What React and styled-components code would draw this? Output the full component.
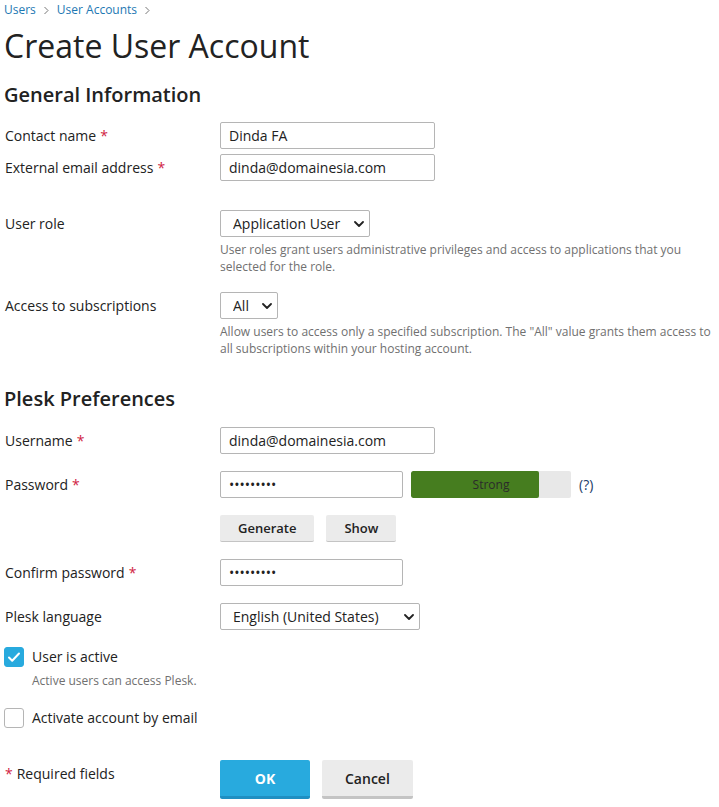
import React from "react";
import styled, { createGlobalStyle } from "styled-components";

const Global = createGlobalStyle`
  html, body { margin: 0; padding: 0; background: #fff; }
  body { font-family: "Open Sans", "Liberation Sans", sans-serif; color: #222; }
  * { box-sizing: border-box; }
`;

const Page = styled.div`
  padding: 0 4px;
  width: 719px;
`;

const Breadcrumbs = styled.nav`
  display: flex;
  align-items: center;
  gap: 5px;
  height: 20px;
  font-size: 12px;
  line-height: 20px;
`;

const Crumb = styled.a`
  color: #1d78b3;
  text-decoration: none;
`;

const Sep = styled.svg`
  width: 7px;
  height: 9px;
  margin: 0 2px;
`;

const Title = styled.h1`
  margin: 6px 0 0;
  font-size: 32px;
  line-height: 40px;
  font-weight: 400;
  color: #222;
`;

const SectionTitle = styled.h2`
  margin: ${(p) => p.$mt}px 0 0;
  font-size: 20px;
  line-height: 28px;
  font-weight: 600;
  color: #222;
`;

const Row = styled.div`
  display: flex;
  align-items: flex-start;
  margin-top: ${(p) => p.$mt}px;
`;

const Label = styled.label`
  width: 216px;
  flex: none;
  font-size: 14px;
  line-height: 27px;
  padding-left: 1px;
`;

const Req = styled.span`
  color: #d02343;
  margin-left: 4px;
`;

const Field = styled.div`
  display: flex;
  flex-direction: column;
  align-items: flex-start;
  flex: 1;
  min-width: 0;
`;

const Inline = styled.div`
  display: flex;
  align-items: center;
  gap: ${(p) => p.$gap || 8}px;
`;

const TextInput = styled.input`
  width: ${(p) => p.$w}px;
  height: 27px;
  border: 1px solid #b5b5b5;
  border-radius: 2px;
  padding: 0 8px;
  font-family: inherit;
  font-size: 14px;
  color: #222;
  background: #fff;
  outline: none;
`;

const SelectWrap = styled.span`
  position: relative;
  display: inline-flex;
`;

const Select = styled.select`
  appearance: none;
  -webkit-appearance: none;
  height: 27px;
  ${(p) => (p.$w ? `width: ${p.$w}px;` : "")}
  border: 1px solid #b5b5b5;
  border-radius: 2px;
  padding: 0 28px 0 12px;
  font-family: inherit;
  font-size: 14px;
  color: #222;
  background: #fff;
  outline: none;
`;

const Chevron = styled.svg`
  position: absolute;
  right: 6px;
  top: 11px;
  width: 10px;
  height: 6px;
  pointer-events: none;
`;

const Hint = styled.div`
  margin-top: ${(p) => p.$mt ?? 4}px;
  font-size: 12px;
  line-height: 17px;
  color: #707070;
  ${(p) => (p.$indent ? `padding-left: ${p.$indent}px;` : "")}
`;

const Strength = styled.div`
  position: relative;
  width: 160px;
  height: 27px;
  border-radius: 2px;
  background: #e8e8e8;
  overflow: hidden;
`;

const StrengthFill = styled.div`
  height: 100%;
  background: #467d1f;
  border-radius: 2px;
`;

const StrengthText = styled.span`
  position: absolute;
  inset: 0;
  display: flex;
  align-items: center;
  justify-content: center;
  font-size: 12px;
  color: #2b2b2b;
`;

const HelpLink = styled.a`
  font-size: 14px;
  color: #223c68;
  text-decoration: none;
`;

const Button = styled.button`
  height: ${(p) => (p.$big ? 39 : 27)}px;
  min-width: ${(p) => (p.$big ? 90 : 0)}px;
  padding: 0 ${(p) => (p.$big ? 23 : 18)}px;
  border: none;
  border-bottom: ${(p) => (p.$big ? 3 : 1)}px solid
    ${(p) => (p.$primary ? "#1f8fc2" : "#c4c4c4")};
  border-radius: 2px;
  background: ${(p) => (p.$primary ? "#28aade" : "#ebebeb")};
  color: ${(p) => (p.$primary ? "#fff" : "#222")};
  font-family: inherit;
  font-size: ${(p) => (p.$big ? 14 : 13)}px;
  font-weight: ${(p) => (p.$primary ? 700 : 600)};
  cursor: pointer;
`;

const CheckRow = styled.label`
  display: flex;
  align-items: center;
  gap: 8px;
  margin-top: ${(p) => p.$mt}px;
  font-size: 14px;
  line-height: 20px;
`;

const Box = styled.span`
  width: 20px;
  height: 20px;
  flex: none;
  border-radius: 3px;
  display: inline-flex;
  align-items: center;
  justify-content: center;
  background: ${(p) => (p.$checked ? "#28aade" : "#fff")};
  border: 1px solid ${(p) => (p.$checked ? "#28aade" : "#b5b5b5")};
`;

const Footer = styled.div`
  display: flex;
  align-items: flex-start;
  margin-top: ${(p) => p.$mt}px;
`;

const FooterNote = styled.div`
  width: 216px;
  flex: none;
  font-size: 14px;
  line-height: 28px;
  padding-left: 1px;
`;

const ReqMark = styled.span`
  color: #d02343;
  margin-right: 4px;
`;

function ChevronIcon() {
  return (
    <Chevron viewBox="0 0 10 6">
      <path d="M1 1l4 4 4-4" fill="none" stroke="#222" strokeWidth="1.8" strokeLinecap="round" strokeLinejoin="round" />
    </Chevron>
  );
}

function Dropdown({ value, w }) {
  return (
    <SelectWrap>
      <Select $w={w} defaultValue={value}>
        <option>{value}</option>
      </Select>
      <ChevronIcon />
    </SelectWrap>
  );
}

function SepIcon() {
  return (
    <Sep viewBox="0 0 7 9">
      <path d="M1.5 1l3.5 3.5L1.5 8" fill="none" stroke="#777" strokeWidth="1" />
    </Sep>
  );
}

export default function App() {
  return (
    <>
      <Global />
      <Page>
        <Breadcrumbs>
          <Crumb href="#">Users</Crumb>
          <SepIcon />
          <Crumb href="#">User Accounts</Crumb>
          <SepIcon />
        </Breadcrumbs>
        <Title>Create User Account</Title>

        <SectionTitle $mt={15}>General Information</SectionTitle>

        <Row $mt={13}>
          <Label>Contact name<Req>*</Req></Label>
          <Field>
            <TextInput $w={215} defaultValue="Dinda FA" />
          </Field>
        </Row>
        <Row $mt={5}>
          <Label>External email address<Req>*</Req></Label>
          <Field>
            <TextInput $w={215} defaultValue="dinda@domainesia.com" />
          </Field>
        </Row>
        <Row $mt={29}>
          <Label>User role</Label>
          <Field>
            <Dropdown value="Application User" />
            <Hint>
              User roles grant users administrative privileges and access to applications that you selected for the role.
            </Hint>
          </Field>
        </Row>
        <Row $mt={17}>
          <Label>Access to subscriptions</Label>
          <Field>
            <Dropdown value="All" />
            <Hint>
              Allow users to access only a specified subscription. The "All" value grants them access to all subscriptions within your hosting account.
            </Hint>
          </Field>
        </Row>

        <SectionTitle $mt={28}>Plesk Preferences</SectionTitle>

        <Row $mt={14}>
          <Label>Username<Req>*</Req></Label>
          <Field>
            <TextInput $w={215} defaultValue="dinda@domainesia.com" />
          </Field>
        </Row>
        <Row $mt={17}>
          <Label>Password<Req>*</Req></Label>
          <Field>
            <Inline $gap={8}>
              <TextInput type="password" $w={183} defaultValue="123456789" />
              <Strength>
                <StrengthFill style={{ width: "80%" }} />
                <StrengthText>Strong</StrengthText>
              </Strength>
              <HelpLink href="#">(?)</HelpLink>
            </Inline>
          </Field>
        </Row>
        <Row $mt={17}>
          <Label />
          <Field>
            <Inline $gap={12}>
              <Button type="button">Generate</Button>
              <Button type="button">Show</Button>
            </Inline>
          </Field>
        </Row>
        <Row $mt={17}>
          <Label>Confirm password<Req>*</Req></Label>
          <Field>
            <TextInput type="password" $w={183} defaultValue="123456789" />
          </Field>
        </Row>
        <Row $mt={17}>
          <Label>Plesk language</Label>
          <Field>
            <Dropdown value="English (United States)" w={200} />
          </Field>
        </Row>

        <CheckRow $mt={17}>
          <Box $checked>
            <svg width="14" height="12" viewBox="0 0 14 12">
              <path d="M2 6.5l3.2 3.2L12 2.5" fill="none" stroke="#fff" strokeWidth="2" strokeLinecap="round" strokeLinejoin="round" />
            </svg>
          </Box>
          User is active
        </CheckRow>
        <Hint $indent={28} $mt={5}>Active users can access Plesk.</Hint>

        <CheckRow $mt={19}>
          <Box />
          Activate account by email
        </CheckRow>

        <Footer $mt={32}>
          <FooterNote><ReqMark>*</ReqMark>Required fields</FooterNote>
          <Inline $gap={12}>
            <Button type="button" $big $primary>OK</Button>
            <Button type="button" $big>Cancel</Button>
          </Inline>
        </Footer>
      </Page>
    </>
  );
}
